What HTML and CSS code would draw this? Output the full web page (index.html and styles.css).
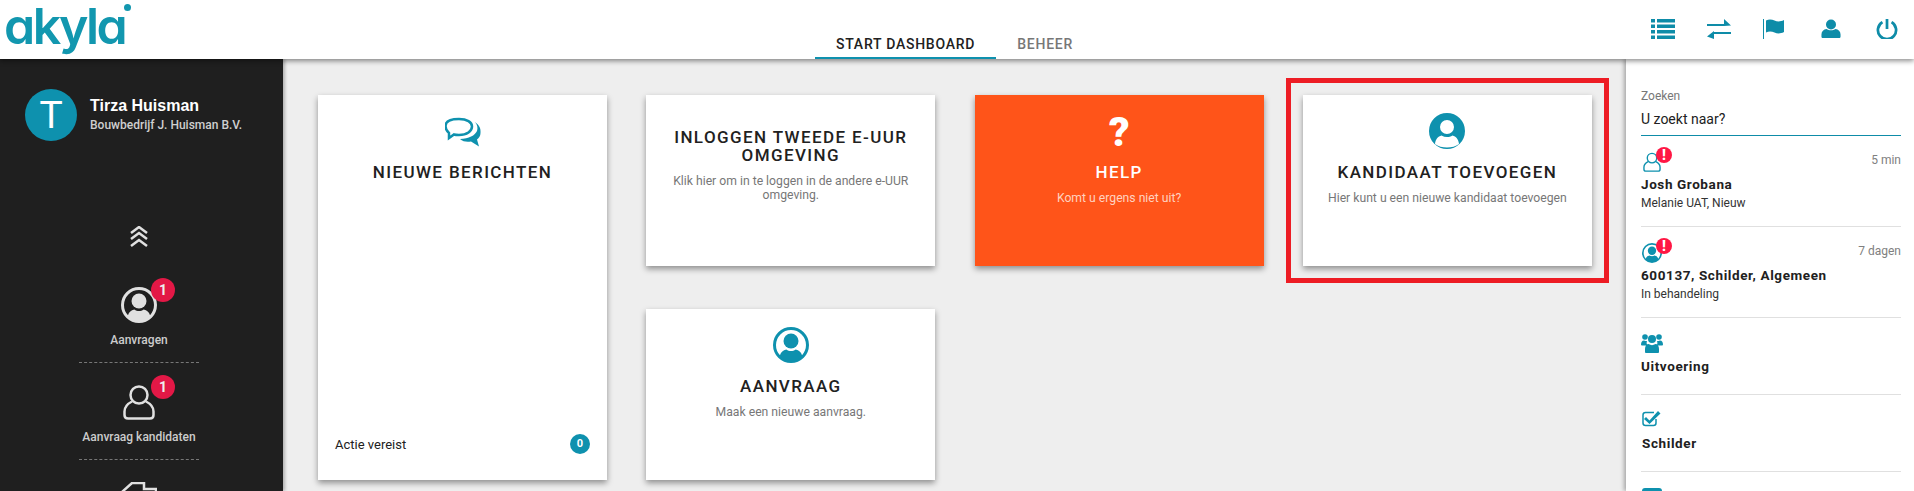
FILE: index.html
```html
<!DOCTYPE html>
<html lang="en">
<head>
  <meta charset="UTF-8">
  <title>akyla - Start dashboard</title>
  <link rel="stylesheet" href="styles.css">
</head>
<body>
  <svg class="defs" width="0" height="0">
    <symbol id="i-circle-user" viewBox="0 0 36 36">
      <path d="M18 0a18 18 0 1 0 0 36a18 18 0 1 0 0-36zM18 3a15 15 0 0 1 15 15c0 4-1.500 7.500-4 10.300c-1-3.300-3-5-6.300-5.800c-1.500 1-3 1.500-4.700 1.500s-3.200-.5-4.700-1.500c-3.300 .8-5.300 2.500-6.300 5.800A15 15 0 0 1 3 18A15 15 0 0 1 18 3z" fill-rule="evenodd"/>
      <circle cx="18" cy="14" r="7.500"/>
      <path d="M7 29.500c1-3.500 3.500-5.500 6.500-6c3 1.800 6 1.800 9 0c3 .5 5.500 2.500 6.500 6c-6.500 6-15.500 6-22 0z"/>
    </symbol>
    <symbol id="i-outline-user" viewBox="0 0 36 36">
      <circle cx="18" cy="11" r="8.500" fill="none" stroke="currentColor" stroke-width="2.500"/>
      <path d="M11 17.500C6 20 3.500 23 3.500 27.500v3.500c0 2 1 3.500 3.500 3.500h22c2.500 0 3.500-1.500 3.500-3.500v-3.500c0-4.500-2.500-7.500-7.500-10" fill="none" stroke="currentColor" stroke-width="2.500"/>
    </symbol>
    <symbol id="i-solid-circle-user" viewBox="0 0 36 36">
      <path fill-rule="evenodd" d="M18 0a18 18 0 1 0 0 36a18 18 0 1 0 0-36zM18 7a7 7 0 1 1 0 14a7 7 0 1 1 0-14zM6 31c.5-5 3-7.500 6.500-8.500c3.500 2 7.500 2 11 0c3.500 1 6 3.500 6.500 8.500c-3 2.500-7.500 3.500-12 3.500s-9-1-12-3.500z"/>
    </symbol>
  </svg>

  <header class="topbar">
    <div class="logo">akyla<span class="logo-dot"></span></div>
    <nav class="tabs">
      <a class="tab tab-active">START DASHBOARD</a>
      <a class="tab">BEHEER</a>
    </nav>
    <div class="top-icons">
      <svg class="top-icon" viewBox="0 0 24 20"><path d="M0 0h4v3.500H0zM6 0h18v3.500H6zM0 5.500h4V9H0zM6 5.500h18V9H6zM0 11h4v3.500H0zM6 11h18v3.500H6zM0 16.500h4V20H0zM6 16.500h18V20H6z"/></svg>
      <svg class="top-icon" viewBox="0 0 24 20"><path d="M0 5h17V0l7 6.500l-7 .5H0zM24 13H7v-1l-7 5.500l7 2.500v-5h17z"/></svg>
      <svg class="top-icon" viewBox="0 0 24 20"><path d="M0 0h1v20H0zM3 1.500c3-1.500 6-1 8.500 0s5.500 1.500 9.500-.5v12c-4 2-7 1.500-9.500 .5s-5.500-1.500-8.500 0z"/></svg>
      <svg class="top-icon" viewBox="0 0 24 22"><circle cx="12" cy="6" r="5.500"/><path d="M3 21c-.8 0-1.500-.7-1.500-1.500V17c0-3.500 2.500-5.500 5.500-6c3 2 7 2 10 0c3 .5 5.500 2.500 5.500 6v2.500c0 .8-.7 1.500-1.500 1.500z"/></svg>
      <svg class="top-icon" viewBox="0 0 22 22"><path d="M9.500 0h3v11h-3z"/><path d="M6 3.500a10 10 0 1 0 10 0" fill="none" stroke="currentColor" stroke-width="3"/></svg>
    </div>
  </header>

  <div class="page">
    <aside class="sidebar">
      <div class="profile">
        <div class="avatar">T</div>
        <div>
          <div class="profile-name">Tirza Huisman</div>
          <div class="profile-company">Bouwbedrijf J. Huisman B.V.</div>
        </div>
      </div>
      <svg class="chevrons" viewBox="0 0 18 21"><path d="M1 7l8-6l8 6M1 13l8-6l8 6M1 20l8-6l8 6" fill="none" stroke="currentColor" stroke-width="2.500"/></svg>
      <a class="side-item">
        <span class="side-icon">
          <svg viewBox="0 0 36 36"><use href="#i-circle-user"/></svg>
          <span class="side-badge">1</span>
        </span>
        <span class="side-label">Aanvragen</span>
      </a>
      <a class="side-item">
        <span class="side-icon">
          <svg viewBox="0 0 36 36"><use href="#i-outline-user"/></svg>
          <span class="side-badge">1</span>
        </span>
        <span class="side-label">Aanvraag kandidaten</span>
      </a>
      <a class="side-item side-item-last">
        <svg class="side-truck" viewBox="0 0 36 36"><path d="M1 10L11 1h12v6h12v20" fill="none" stroke="currentColor" stroke-width="2.500"/></svg>
      </a>
    </aside>

    <main class="content">
      <div class="card card-tall">
        <svg class="card-icon" viewBox="0 0 36 36"><path d="M4 20c-2.500-2-3.500-4.500-3.500-7C.5 8 6 6 14 6s13 3 13 7.500s-5 8.500-13 8.500c-2 0-3.500 0-5-.5L4 25z" fill="none" stroke="currentColor" stroke-width="2.500"/><path d="M30 9c4 3 6 6 5.500 11c0 3-1.500 5-3.500 6.500l2 7l-8-5c-3.500 .5-8 .5-11-2.500c9-.5 15-3.500 17-8c1-3 .5-6-2-9z"/></svg>
        <h2 class="card-title">NIEUWE BERICHTEN</h2>
        <div class="card-footer">
          <span>Actie vereist</span>
          <span class="count">0</span>
        </div>
      </div>

      <div class="card card-noicon">
        <h2 class="card-title">INLOGGEN TWEEDE E-UUR OMGEVING</h2>
        <p class="card-text">Klik hier om in te loggen in de andere e-UUR omgeving.</p>
      </div>

      <div class="card card-help">
        <div class="help-mark">?</div>
        <h2 class="card-title">HELP</h2>
        <p class="card-text">Komt u ergens niet uit?</p>
      </div>

      <div class="card card-marked">
        <svg class="card-icon" viewBox="0 0 36 36"><use href="#i-solid-circle-user"/></svg>
        <h2 class="card-title">KANDIDAAT TOEVOEGEN</h2>
        <p class="card-text">Hier kunt u een nieuwe kandidaat toevoegen</p>
      </div>

      <div class="card">
        <svg class="card-icon" viewBox="0 0 36 36"><use href="#i-circle-user"/></svg>
        <h2 class="card-title">AANVRAAG</h2>
        <p class="card-text">Maak een nieuwe aanvraag.</p>
      </div>
    </main>

    <aside class="panel">
      <div class="search">
        <label class="search-label">Zoeken</label>
        <div class="search-input">U zoekt naar?</div>
      </div>

      <div class="feed-item">
        <div class="feed-head">
          <span class="feed-icon feed-icon-alert">
            <svg viewBox="0 0 36 36"><use href="#i-outline-user"/></svg>
            <span class="alert">!</span>
          </span>
          <span class="feed-time">5 min</span>
        </div>
        <div class="feed-name">Josh Grobana</div>
        <div class="feed-sub">Melanie UAT, Nieuw</div>
      </div>

      <div class="feed-item">
        <div class="feed-head">
          <span class="feed-icon feed-icon-alert">
            <svg viewBox="0 0 36 36"><use href="#i-circle-user"/></svg>
            <span class="alert">!</span>
          </span>
          <span class="feed-time">7 dagen</span>
        </div>
        <div class="feed-name">600137, Schilder, Algemeen</div>
        <div class="feed-sub">In behandeling</div>
      </div>

      <div class="feed-item feed-item-short">
        <div class="feed-head">
          <svg class="feed-group" viewBox="0 0 22 20"><circle cx="4" cy="4" r="2.800"/><circle cx="18" cy="4" r="2.800"/><circle cx="11" cy="6" r="4"/><path d="M0 12c0-3 1-4.500 3-4.500c1 .5 2 .5 3 .5c-.5 1.500-.5 2.500 0 3.500l-1 1H1c-.5 0-1-.2-1-.5zM22 12c0-3-1-4.500-3-4.500c-1 .5-2 .5-3 .5c.5 1.500 .5 2.500 0 3.500l1 1h4c.5 0 1-.2 1-.5zM5 20c-.5 0-1-.5-1-1v-3c0-3 1.500-5 3.500-5c2.500 1.500 4.500 1.500 7 0c2 0 3.500 2 3.500 5v3c0 .5-.5 1-1 1z"/></svg>
        </div>
        <div class="feed-name">Uitvoering</div>
      </div>

      <div class="feed-item feed-item-short">
        <div class="feed-head">
          <svg class="feed-check" viewBox="0 0 19 17"><path d="M14 9v4c0 1.500-1 2.500-2.500 2.500H3.500C2 15.500 1 14.500 1 13V5c0-1.500 1-2.500 2.500-2.500H12" fill="none" stroke="currentColor" stroke-width="1.500"/><path d="M4 7l3.500 3.500L16 1l2.500 2.500L7.500 14L2 9z"/></svg>
        </div>
        <div class="feed-name feed-name-check">Schilder</div>
      </div>

      <div class="feed-item">
        <div class="feed-head"><span class="feed-cut"></span></div>
      </div>
    </aside>
  </div>
</body>
</html>
```

FILE: styles.css
```css
* {
  box-sizing: border-box;
}

body {
  font-family: 'Roboto', 'Liberation Sans', sans-serif;
  background-color: #EEEEEE;
  color: #212121;
  margin: 0;
  display: flex;
  flex-direction: column;
  height: 100vh;
  overflow: hidden;
}

svg {
  fill: currentColor;
  display: block;
}

.defs {
  position: absolute;
}

/* top bar */
.topbar {
  height: 59px;
  flex-shrink: 0;
  background-color: #FFFFFF;
  display: flex;
  box-shadow: 0 2px 5px rgba(0, 0, 0, 0.45);
  position: relative;
  z-index: 2;
}

.logo {
  width: 815px;
  flex-shrink: 0;
  padding-left: 4px;
  font-family: 'Inter', sans-serif;
  font-feature-settings: "cv11";
  font-size: 50px;
  font-weight: 600;
  line-height: 52px;
  letter-spacing: -2.5px;
  color: #1297AF;
  position: relative;
}

.logo-dot {
  position: absolute;
  left: 124px;
  top: 4px;
  width: 7px;
  height: 7px;
  border-radius: 50%;
  background-color: #1297AF;
}

.tabs {
  display: flex;
  align-items: flex-end;
}

.tab {
  height: 59px;
  padding: 36px 21px 0;
  font-size: 14px;
  font-weight: 500;
  letter-spacing: 0.75px;
  line-height: 16px;
  color: #777777;
}

.tab-active {
  color: #212121;
  border-bottom: 2px solid #0E91AE;
}

.top-icons {
  margin-left: auto;
  display: flex;
  align-items: center;
  gap: 32px;
  padding: 0 15px 2px 0;
  color: #0E8CA8;
}

.top-icon {
  width: 24px;
  height: 20px;
}

/* page */
.page {
  flex-grow: 1;
  display: flex;
  min-height: 0;
}

/* left sidebar */
.sidebar {
  width: 283px;
  flex-shrink: 0;
  background-color: #1F1F1F;
  color: #E0E0E0;
  box-shadow: 2px 0 3px rgba(0, 0, 0, 0.25);
  overflow: hidden;
  position: relative;
  z-index: 1;
}

.profile {
  display: flex;
  align-items: center;
  gap: 13px;
  padding: 30px 0 0 25px;
}

.avatar {
  width: 52px;
  height: 52px;
  border-radius: 50%;
  background-color: #0E91AE;
  color: #FFFFFF;
  font-family: 'Liberation Sans', sans-serif;
  font-size: 38px;
  line-height: 52px;
  text-align: center;
}

.profile-name {
  font-family: 'Liberation Sans', sans-serif;
  font-size: 16px;
  font-weight: 700;
  line-height: 18px;
  color: #FFFFFF;
}

.profile-company {
  font-size: 12px;
  font-weight: 500;
  line-height: 16px;
  margin-top: 2px;
  color: #CFCFCF;
}

.chevrons {
  width: 18px;
  height: 21px;
  margin: 85px 0 0 130px;
}

.side-item {
  display: flex;
  flex-direction: column;
  align-items: center;
  width: 120px;
  height: 97px;
  margin-left: 79px;
  padding-top: 21px;
  border-bottom: 1px dashed #777777;
}

.side-item:first-of-type {
  margin-top: 19px;
}

.side-item-last {
  border-bottom: none;
  padding-top: 22px;
}

.side-icon {
  position: relative;
  width: 36px;
  height: 36px;
}

.side-truck {
  width: 36px;
  height: 36px;
}

.side-badge {
  position: absolute;
  left: 30px;
  top: -9px;
  width: 24px;
  height: 24px;
  border-radius: 50%;
  background-color: #E31846;
  color: #EEEEEE;
  font-size: 14px;
  font-weight: 700;
  line-height: 24px;
  text-align: center;
}

.side-label {
  font-size: 12px;
  font-weight: 500;
  line-height: 16px;
  margin-top: 9px;
  color: #CCCCCC;
}

/* cards */
.content {
  flex-grow: 1;
  padding: 36px 0 0 35px;
  display: grid;
  grid-template-columns: repeat(4, 289px);
  grid-auto-rows: 171px;
  column-gap: 39.3px;
  row-gap: 43px;
  overflow: hidden;
}

.card {
  background-color: #FFFFFF;
  box-shadow: 0 3px 6px rgba(0, 0, 0, 0.4);
  padding: 18px 22px 0;
  text-align: center;
  display: flex;
  flex-direction: column;
  color: #0E91AE;
}

.card-tall {
  grid-row: span 2;
}

.card-noicon {
  padding-top: 33px;
}

.card-marked {
  outline: 5px solid #ED1C24;
  outline-offset: 12px;
}

.card-icon {
  width: 36px;
  height: 36px;
  margin: 0 auto 14px;
  flex-shrink: 0;
}

.card-title {
  margin: 0;
  font-size: 17px;
  font-weight: 500;
  line-height: 18px;
  letter-spacing: 1.4px;
  color: #212121;
}

.card-text {
  margin: 10px 0 0;
  font-size: 12.2px;
  line-height: 14px;
  color: #777777;
}

.card-footer {
  margin: auto -5px 0;
  padding-bottom: 26px;
  display: flex;
  justify-content: space-between;
  align-items: center;
  font-size: 13px;
  color: #212121;
}

.count {
  width: 20px;
  height: 20px;
  border-radius: 50%;
  background-color: #0E91AE;
  color: #FFFFFF;
  font-size: 11px;
  font-weight: 700;
  line-height: 20px;
}

.card-help {
  background-color: #FF5419;
}

.card-help .card-title {
  color: #FFFFFF;
}

.card-help .card-text {
  color: #FFD2C0;
}

.help-mark {
  height: 36px;
  margin-bottom: 14px;
  font-size: 41px;
  font-weight: 900;
  line-height: 38px;
  color: #FFFFFF;
}

/* right panel */
.panel {
  width: 288px;
  flex-shrink: 0;
  background-color: #FFFFFF;
  padding: 30px 13px 0 15px;
  box-shadow: -2px 0 4px rgba(0, 0, 0, 0.3);
  overflow: hidden;
  position: relative;
  z-index: 1;
}

.search {
  border-bottom: 1px solid #0E8CA8;
  height: 47px;
}

.search-label {
  display: block;
  font-size: 12px;
  line-height: 14px;
  color: #777777;
}

.search-input {
  font-size: 14px;
  line-height: 18px;
  margin-top: 7px;
}

.feed-item {
  padding: 12px 0 15px;
  border-bottom: 1px solid #E0E0E0;
  color: #0E91AE;
}

.feed-item-short {
  padding-bottom: 20px;
}

.feed-head {
  height: 24px;
  display: flex;
  align-items: flex-end;
  justify-content: space-between;
  position: relative;
}

.feed-icon {
  position: relative;
  width: 20px;
  height: 20px;
  margin-left: 1px;
}

.alert {
  position: absolute;
  left: 14px;
  top: -5px;
  width: 16px;
  height: 16px;
  border-radius: 50%;
  background-color: #FF1744;
  color: #FFFFFF;
  font-size: 14px;
  font-weight: 900;
  line-height: 16px;
  text-align: center;
}

.feed-time {
  align-self: center;
  font-size: 12px;
  color: #808080;
}

.feed-name {
  margin-top: 4px;
  font-size: 13.5px;
  font-weight: 700;
  line-height: 16px;
  letter-spacing: 0.6px;
  color: #212121;
}

.feed-name-check {
  margin-left: 1px;
}

.feed-sub {
  margin-top: 3px;
  font-size: 12px;
  line-height: 16px;
  color: #333333;
}

.feed-group {
  width: 22px;
  height: 20px;
  margin-bottom: 1px;
}

.feed-check {
  width: 19px;
  height: 17px;
  margin: 0 0 4px 1px;
}

.feed-cut {
  width: 20px;
  height: 20px;
  margin-left: 1px;
  border-radius: 3px;
  background-color: #0E91AE;
}
```
